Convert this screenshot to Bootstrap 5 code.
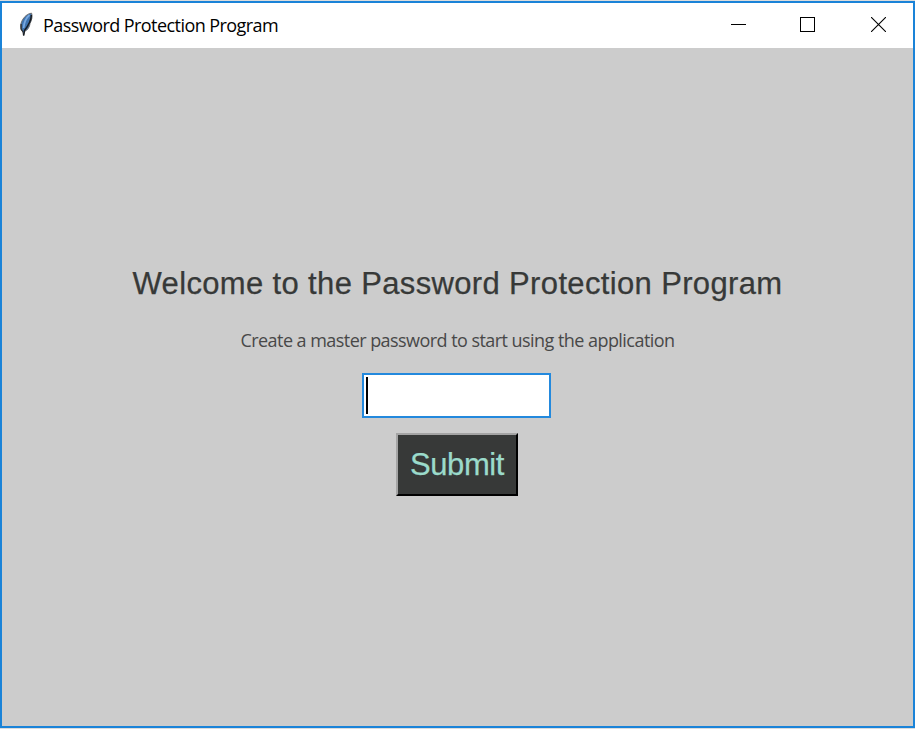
<!DOCTYPE html>
<html lang="en">
<head>
<meta charset="utf-8">
<meta name="viewport" content="width=device-width, initial-scale=1">
<title>Password Protection Program</title>
<link href="https://cdn.jsdelivr.net/npm/bootstrap@5.3.0/dist/css/bootstrap.min.css" rel="stylesheet">
<style>
body{background:#dcdcdc;font-family:"Open Sans","Noto Sans",sans-serif;padding:1px 0}
.app-window{height:727px;border:2px solid #1a83d8;background:#ccc}
.title-strip{height:45px;background:#fff;color:#000;padding:0 27px 2px 17px}
.app-name{font-size:18px;line-height:24px;letter-spacing:-.56px;margin-left:9px}
.win-controls{gap:54px}
.close-icon{margin-left:2px}
.app-content{padding-top:216px}
.welcome{font-family:"Liberation Sans",Arial,sans-serif;font-size:31px;line-height:40px;letter-spacing:.35px;color:#373938;-webkit-text-stroke:.25px #373938}
.hint{font-size:18px;line-height:24px;letter-spacing:-.55px;color:#484848;margin-top:24px}
.master-input{width:189px;height:45px;border:2px solid #2389dd;border-radius:0;background:#fff;padding:2px;margin:21px 2px 0 0}
.caret{width:2px;height:37px;background:#000}
.submit-btn{width:122px;height:63px;margin:15px 1px 0 0;border-radius:0;border:2px solid;border-color:#a4a4a4 #000 #000 #a4a4a4;background:#373938;color:#9bdbcb;font-family:"Liberation Sans",Arial,sans-serif;font-size:31px;line-height:40px;letter-spacing:-.4px;padding:0;-webkit-text-stroke:.25px #9bdbcb}
</style>
<script src="https://cdn.jsdelivr.net/npm/bootstrap@5.3.0/dist/js/bootstrap.bundle.min.js"></script>
</head>
<body class="overflow-hidden">
<div class="app-window d-flex flex-column">
  <header class="title-strip d-flex align-items-center justify-content-between">
    <div class="d-flex align-items-center">
      <svg width="15" height="25" viewBox="0 0 15 25" aria-hidden="true">
        <path d="M12.6 1.2C7.500 1.500 2 7.500 1.600 14C1.500 16.500 2.200 18.500 3.700 19.700L4.500 23.500L5.500 19.500C9 18 10.700 14.500 11 11.500C12.500 8.500 13.800 4.500 12.600 1.200Z" fill="#3f74b0" stroke="#6d6d6d" stroke-width="1"/>
        <path d="M10.500 3C7 6 5 11 4.600 16" fill="none" stroke="#79a9e0" stroke-width="1.700"/>
        <path d="M12.300 3C12.500 9 9 14 5.500 18.500L4.600 23.500" fill="none" stroke="#181c22" stroke-width="1.500"/>
        <path d="M2.200 12V17L4 20" fill="none" stroke="#333" stroke-width="1.200"/>
      </svg>
      <span class="app-name text-nowrap">Password Protection Program</span>
    </div>
    <div class="win-controls d-flex align-items-center">
      <svg width="15" height="15" shape-rendering="crispEdges"><path d="M0 7.500H15" stroke="#000"/></svg>
      <svg width="15" height="15" shape-rendering="crispEdges"><rect x=".5" y=".5" width="14" height="14" fill="none" stroke="#000"/></svg>
      <svg class="close-icon" width="15" height="15"><path d="M0 0L15 15M15 0L0 15" stroke="#000" stroke-width="1.100"/></svg>
    </div>
  </header>
  <main class="app-content flex-grow-1 d-flex flex-column align-items-center">
    <h1 class="welcome fw-normal mb-0 text-nowrap">Welcome to the Password Protection Program</h1>
    <p class="hint mb-0 text-nowrap">Create a master password to start using the application</p>
    <div class="master-input form-control" role="textbox" tabindex="0" aria-label="Master password"><div class="caret"></div></div>
    <button class="submit-btn btn" type="button">Submit</button>
  </main>
</div>
</body>
</html>
